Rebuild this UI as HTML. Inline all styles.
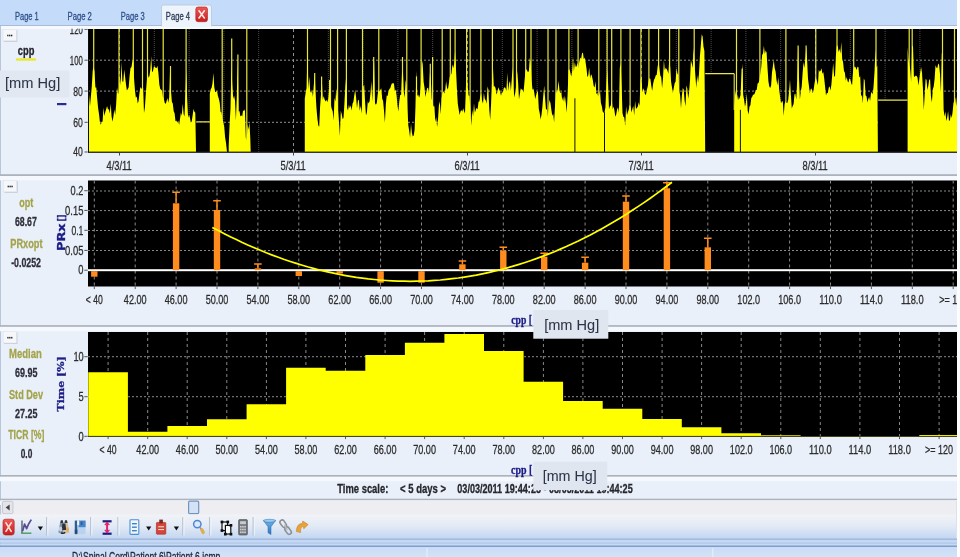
<!DOCTYPE html>
<html><head><meta charset="utf-8"><title>ICM+ Page 4</title>
<style>
html,body{margin:0;padding:0;background:#fff;}
body{width:960px;height:557px;overflow:hidden;font-family:"Liberation Sans",sans-serif;}
svg{display:block;}
</style></head><body>
<svg width="960" height="557" viewBox="0 0 960 557">
<defs><filter id="soft" x="0" y="0" width="960" height="557" filterUnits="userSpaceOnUse"><feGaussianBlur stdDeviation="0.55" edgeMode="duplicate"/></filter></defs>
<g filter="url(#soft)">
<rect x="0" y="0" width="960" height="557" fill="#e9f0fa"/>
<rect x="0" y="0" width="960" height="26" fill="#c4dcf9"/>
<rect x="0" y="25" width="960" height="1" fill="#a9bbd6"/>
<rect x="0" y="26" width="960" height="3" fill="#f6f9fd"/>
<path d="M161.5 26 V7 Q161.5 5 163.5 5 H209.5 Q211.5 5 211.5 7 V26 Z" fill="#eef4fc" stroke="#b4c6e0" stroke-width="0.8"/>
<rect x="162" y="25" width="49" height="2" fill="#eef4fc"/>
<text x="15" y="19.7" font-family='"Liberation Sans", sans-serif' font-size="10.5" font-weight="normal" fill="#30508c" stroke="#30508c" stroke-width="0.3" text-anchor="start" textLength="23.8" lengthAdjust="spacingAndGlyphs" >Page 1</text>
<text x="67.5" y="19.7" font-family='"Liberation Sans", sans-serif' font-size="10.5" font-weight="normal" fill="#30508c" stroke="#30508c" stroke-width="0.3" text-anchor="start" textLength="24.4" lengthAdjust="spacingAndGlyphs" >Page 2</text>
<text x="120.8" y="19.7" font-family='"Liberation Sans", sans-serif' font-size="10.5" font-weight="normal" fill="#30508c" stroke="#30508c" stroke-width="0.3" text-anchor="start" textLength="23.9" lengthAdjust="spacingAndGlyphs" >Page 3</text>
<text x="165.8" y="19.7" font-family='"Liberation Sans", sans-serif' font-size="10.5" font-weight="normal" fill="#2c3a58" stroke="#2c3a58" stroke-width="0.3" text-anchor="start" textLength="24.2" lengthAdjust="spacingAndGlyphs" >Page 4</text>
<rect x="195.8" y="7" width="11.7" height="14.7" rx="2.2" fill="url(#redg)" stroke="#b02020" stroke-width="0.6"/>
<path d="M199 10.8 L204.4 18 M204.4 10.8 L199 18" stroke="#fde9e6" stroke-width="1.6" stroke-linecap="round"/>
<rect x="0" y="26" width="1" height="520" fill="#b8c6dc"/>
<rect x="0" y="174.2" width="957" height="1.8" fill="#adb3be"/>
<rect x="0" y="176.0" width="957" height="4.4" fill="#f5f8fd"/>
<rect x="0" y="325.1" width="957" height="1.8" fill="#adb3be"/>
<rect x="0" y="326.90000000000003" width="957" height="4.4" fill="#f5f8fd"/>
<rect x="0" y="475" width="957" height="1.8" fill="#adb3be"/>
<rect x="0" y="476.8" width="957" height="4.4" fill="#f5f8fd"/>
<rect x="0" y="498.7" width="957" height="1.8" fill="#adb3be"/>
<rect x="0" y="500.5" width="957" height="4.4" fill="#f5f8fd"/>
<rect x="88" y="29" width="869" height="123.5" fill="#000"/>
<path d="M88 60.2 H957 M88 91.1 H957 M88 122.3 H957" stroke="#909090" stroke-width="1" stroke-dasharray="2 2" fill="none"/>
<path d="M119.5 29 V152 M293.5 29 V152 M467.5 29 V152 M641.5 29 V152 M815.5 29 V152" stroke="#909090" stroke-width="1" stroke-dasharray="3 3" fill="none"/>
<path d="M154.3 29 V152 M189.1 29 V152 M223.9 29 V152 M258.7 29 V152 M328.3 29 V152 M363.1 29 V152 M397.9 29 V152 M432.7 29 V152 M502.3 29 V152 M537.1 29 V152 M571.9 29 V152 M606.7 29 V152 M676.3 29 V152 M711.1 29 V152 M745.9 29 V152 M780.7 29 V152 M850.3 29 V152 M885.1 29 V152 M919.9 29 V152 M954.7 29 V152" stroke="#4c4c4c" stroke-width="1" stroke-dasharray="1 1" fill="none"/>
<rect x="705.2" y="74" width="29" height="78" fill="#000"/><rect x="878.1" y="100.4" width="29.5" height="51.6" fill="#000"/><rect x="196.3" y="122.2" width="13.5" height="29.8" fill="#000"/>
<path d="M734.2 73.7 V110" stroke="#e6e650" stroke-width="1.1" fill="none"/>
<path d="M196.3 121.9 H209.8 M705.2 73.7 H734.2 M878.1 100.1 H907.6" stroke="#e6e650" stroke-width="1.2" fill="none"/>
<path d="M93.7 29.0 V142.0 M119.0 29.0 V142.0 M133.3 29.0 V142.0 M142.5 29.0 V142.0 M147.5 29.0 V142.0 M163.2 29.0 V142.0 M186.1 29.0 V142.0 M222.2 29.0 V142.0 M246.8 29.0 V142.0 M307.5 29.0 V142.0 M330.5 29.0 V142.0 M337.6 29.0 V142.0 M346.4 29.0 V142.0 M362.5 29.0 V142.0 M378.8 29.0 V142.0 M406.8 29.0 V142.0 M421.1 29.0 V142.0 M442.2 29.0 V142.0 M450.3 29.0 V142.0 M455.1 29.0 V142.0 M466.6 29.0 V142.0 M470.1 29.0 V142.0 M480.9 29.0 V142.0 M492.4 29.0 V142.0 M513.0 29.0 V142.0 M516.5 29.0 V142.0 M525.7 29.0 V142.0 M531.0 29.0 V142.0 M548.0 29.0 V142.0 M556.0 29.0 V142.0 M568.9 29.0 V142.0 M578.1 29.0 V142.0 M598.8 29.0 V142.0 M607.1 29.0 V142.0 M611.7 29.0 V142.0 M620.9 29.0 V142.0 M630.1 29.0 V142.0 M640.9 29.0 V142.0 M648.9 29.0 V142.0 M658.6 29.0 V142.0 M669.6 29.0 V142.0 M678.8 29.0 V142.0 M694.2 29.0 V142.0 M736.5 29.0 V142.0 M759.9 29.0 V142.0 M785.9 29.0 V142.0 M815.8 29.0 V142.0 M837.0 29.0 V142.0 M853.7 29.0 V142.0 M876.0 29.0 V142.0 M909.2 29.0 V142.0 M912.2 29.0 V142.0 M942.5 29.0 V142.0 M954.5 29.0 V142.0" stroke="#e6e63c" stroke-width="1.2" fill="none"/>
<path d="M170.5 66.1 V142.0 M231.7 38.5 V142.0 M237.9 54.6 V142.0 M314.7 73.0 V142.0 M321.6 76.4 V142.0 M329.6 79.9 V142.0 M373.7 56.9 V142.0 M402.5 56.9 V142.0 M416.5 76.4 V142.0 M430.3 63.8 V142.0 M432.6 56.9 V142.0 M742.2 68.4 V142.0 M798.1 45.4 V142.0 M806.1 45.4 V142.0" stroke="#e6e63c" stroke-width="1.2" fill="none"/>
<path d="M88.2 152.0 L88.2 95.3 L89.1 95.0 L90.0 106.2 L90.9 96.5 L91.8 86.2 L92.7 70.8 L93.6 66.8 L94.5 71.3 L95.4 87.6 L96.3 87.4 L97.2 98.6 L98.1 107.9 L99.0 114.1 L99.9 122.0 L100.8 124.8 L101.7 122.0 L102.6 121.5 L103.5 107.5 L104.4 116.0 L105.3 111.9 L106.2 109.1 L107.1 106.0 L108.0 109.5 L108.9 109.3 L109.8 113.6 L110.7 103.5 L111.6 116.4 L112.5 121.7 L113.4 116.5 L114.3 109.6 L115.2 115.1 L116.1 105.0 L117.0 87.2 L117.9 93.3 L118.8 93.7 L119.7 74.3 L120.6 85.3 L121.5 62.0 L122.4 81.8 L123.3 81.6 L124.2 69.4 L125.1 76.8 L126.0 84.5 L126.9 90.6 L127.8 88.9 L128.7 87.3 L129.6 75.8 L130.5 68.0 L131.4 67.3 L132.3 62.0 L133.2 59.3 L134.1 79.2 L135.0 90.8 L135.9 97.7 L136.8 96.5 L137.7 103.4 L138.6 101.1 L139.5 92.8 L140.4 87.0 L141.3 88.5 L142.2 88.8 L143.1 87.8 L144.0 113.1 L144.9 107.6 L145.8 93.4 L146.7 83.0 L147.6 71.9 L148.5 77.7 L149.4 76.3 L150.3 69.9 L151.2 55.9 L152.1 72.3 L153.0 70.9 L153.9 66.4 L154.8 66.4 L155.7 68.0 L156.6 68.0 L157.5 65.7 L158.4 72.9 L159.3 84.2 L160.2 88.8 L161.1 89.7 L162.0 90.7 L162.9 96.9 L163.8 98.5 L164.7 102.8 L165.6 103.9 L166.5 101.6 L167.4 98.0 L168.3 102.8 L169.2 97.6 L170.1 67.8 L171.0 92.3 L171.9 101.9 L172.8 103.6 L173.7 111.2 L174.6 113.3 L175.5 121.2 L176.4 120.4 L177.3 123.1 L178.2 120.6 L179.1 125.1 L180.0 118.9 L180.9 112.4 L181.8 115.7 L182.7 103.8 L183.6 114.0 L184.5 116.4 L185.4 93.7 L186.3 69.4 L187.2 99.6 L188.1 117.7 L189.0 114.7 L189.9 117.5 L190.8 122.5 L191.7 121.4 L192.6 115.5 L193.5 109.1 L194.4 111.8 L195.3 112.8 L196.0 152.0 Z M209.8 152.0 L209.8 93.7 L210.7 89.2 L211.6 87.8 L212.5 83.3 L213.4 73.1 L214.3 87.3 L215.2 92.0 L216.1 91.9 L217.0 90.4 L217.9 95.8 L218.8 98.7 L219.7 102.4 L220.6 112.0 L221.5 112.4 L222.4 119.0 L223.3 122.1 L224.2 126.8 L225.1 137.2 L226.0 142.7 L226.9 151.0 L227.1 152.0 Z M228.7 152.0 L228.7 145.9 L229.6 124.3 L230.5 108.6 L231.4 66.2 L232.3 85.1 L233.2 98.8 L234.1 95.6 L235.0 100.6 L235.9 120.6 L236.8 96.6 L237.7 62.2 L238.6 111.7 L239.5 111.1 L240.4 116.4 L241.3 115.2 L242.2 116.4 L243.1 110.2 L244.0 111.2 L244.9 109.0 L245.8 137.6 L246.7 140.5 L247.6 124.3 L248.5 129.4 L249.4 122.0 L250.3 138.4 L250.7 152.0 Z M304.8 152.0 L304.8 98.8 L305.7 92.2 L306.6 88.1 L307.5 51.4 L308.4 89.5 L309.3 76.6 L310.2 91.1 L311.1 93.0 L312.0 89.6 L312.9 97.0 L313.8 85.2 L314.7 73.9 L315.6 94.0 L316.5 108.4 L317.4 118.7 L318.3 125.4 L319.2 126.7 L320.1 106.4 L321.0 94.5 L321.9 81.3 L322.8 99.7 L323.7 96.0 L324.6 99.5 L325.5 101.6 L326.4 99.8 L327.3 102.2 L328.2 98.9 L329.1 89.1 L330.0 88.8 L330.9 105.8 L331.8 109.0 L332.7 111.2 L333.6 120.4 L334.5 97.8 L335.4 101.6 L336.3 88.3 L337.2 99.5 L338.1 110.9 L339.0 122.0 L339.9 136.0 L340.8 110.8 L341.7 114.1 L342.6 119.1 L343.5 117.9 L344.4 103.8 L345.3 87.0 L346.2 76.1 L347.1 107.9 L348.0 110.6 L348.9 104.8 L349.8 108.2 L350.7 105.3 L351.6 110.4 L352.5 103.8 L353.4 101.8 L354.3 95.2 L355.2 89.5 L356.1 97.4 L357.0 108.3 L357.9 100.8 L358.8 99.4 L359.7 110.7 L360.6 105.5 L361.5 113.6 L362.4 101.4 L363.3 86.2 L364.2 84.8 L365.1 102.4 L366.0 115.5 L366.9 112.4 L367.8 101.6 L368.7 103.4 L369.6 101.3 L370.5 92.9 L371.4 81.0 L372.3 101.6 L373.2 77.7 L374.1 61.0 L375.0 103.2 L375.9 104.7 L376.8 103.1 L377.7 94.3 L378.6 88.8 L379.5 91.6 L380.4 89.7 L381.3 88.2 L382.2 98.8 L383.1 101.0 L384.0 110.5 L384.9 123.0 L385.8 104.5 L386.7 95.6 L387.6 95.9 L388.5 91.2 L389.4 89.0 L390.3 88.1 L391.2 84.9 L392.1 82.9 L393.0 83.7 L393.9 82.9 L394.8 91.1 L395.7 89.6 L396.6 95.6 L397.5 105.7 L398.4 111.6 L399.3 101.1 L400.2 94.8 L401.1 94.9 L402.0 73.4 L402.9 71.4 L403.8 91.9 L404.7 97.7 L405.6 79.7 L406.5 84.9 L407.4 108.9 L408.3 125.3 L409.2 130.9 L410.1 137.7 L411.0 123.7 L411.9 132.7 L412.8 136.4 L413.7 135.5 L414.6 130.0 L415.5 106.8 L416.4 70.6 L417.3 95.9 L418.2 94.4 L419.1 97.8 L420.0 94.7 L420.9 84.2 L421.8 59.2 L422.7 64.1 L423.6 81.7 L424.5 87.6 L425.4 97.0 L426.3 92.1 L427.2 88.1 L428.1 87.7 L429.0 93.3 L429.9 72.6 L430.8 78.6 L431.7 98.8 L432.6 102.8 L433.5 106.6 L434.4 106.3 L435.3 122.0 L436.2 117.0 L437.1 126.9 L438.0 119.3 L438.9 105.4 L439.8 101.3 L440.7 114.5 L441.6 98.0 L442.5 93.5 L443.4 91.0 L444.3 93.5 L445.2 90.2 L446.1 81.2 L447.0 87.7 L447.9 89.6 L448.8 84.0 L449.7 76.9 L450.6 75.2 L451.5 73.5 L452.4 64.3 L453.3 68.3 L454.2 63.5 L455.1 50.6 L456.0 69.4 L456.9 88.5 L457.8 103.7 L458.7 109.6 L459.6 115.0 L460.5 111.5 L461.4 110.0 L462.3 111.7 L463.2 108.2 L464.1 111.2 L465.0 113.5 L465.9 87.8 L466.8 69.1 L467.7 86.3 L468.6 95.4 L469.5 95.9 L470.4 109.3 L471.3 125.8 L472.2 110.1 L473.1 116.4 L474.0 103.3 L474.9 112.7 L475.8 109.8 L476.7 107.7 L477.6 109.5 L478.5 101.8 L479.4 101.5 L480.3 96.3 L481.2 93.0 L482.1 100.7 L483.0 103.4 L483.9 92.7 L484.8 99.0 L485.7 100.3 L486.6 103.8 L487.5 86.5 L488.4 89.5 L489.3 109.8 L490.2 120.1 L491.1 103.5 L492.0 83.1 L492.9 66.2 L493.8 86.5 L494.7 86.3 L495.6 88.3 L496.5 94.5 L497.4 91.9 L498.3 87.3 L499.2 89.4 L500.1 91.6 L501.0 95.7 L501.9 92.1 L502.8 92.7 L503.7 88.3 L504.6 87.2 L505.5 87.9 L506.4 90.9 L507.3 72.7 L508.2 91.0 L509.1 83.3 L510.0 80.9 L510.9 91.0 L511.8 78.7 L512.7 67.0 L513.6 90.2 L514.5 97.5 L515.4 91.7 L516.3 84.8 L517.2 70.9 L518.1 82.6 L519.0 99.4 L519.9 93.8 L520.8 88.2 L521.7 89.5 L522.6 89.7 L523.5 92.6 L524.4 82.4 L525.3 72.4 L526.2 69.1 L527.1 70.6 L528.0 72.3 L528.9 71.1 L529.8 57.8 L530.7 61.7 L531.6 80.5 L532.5 89.8 L533.4 88.5 L534.3 92.8 L535.2 99.3 L536.1 95.2 L537.0 92.0 L537.9 91.3 L538.8 108.9 L539.7 113.1 L540.6 119.6 L541.5 114.8 L542.4 106.8 L543.3 95.2 L544.2 85.6 L545.1 98.3 L546.0 109.6 L546.9 109.3 L547.8 117.1 L548.7 105.4 L549.6 99.7 L550.5 103.3 L551.4 109.9 L552.3 115.7 L553.2 113.7 L554.1 122.4 L555.0 105.9 L555.9 90.3 L556.8 92.9 L557.7 89.1 L558.6 80.7 L559.5 90.4 L560.4 93.2 L561.3 91.4 L562.2 100.4 L563.1 96.5 L564.0 102.1 L564.9 95.6 L565.8 102.8 L566.7 112.7 L567.6 94.7 L568.5 69.9 L569.4 69.2 L570.3 72.3 L571.2 76.7 L572.1 72.0 L573.0 56.8 L573.9 71.3 L574.8 62.3 L575.7 66.7 L576.6 66.4 L577.5 62.8 L578.4 67.8 L579.3 61.6 L580.2 57.5 L581.1 59.0 L582.0 53.6 L582.9 52.5 L583.8 59.2 L584.7 57.4 L585.6 62.2 L586.5 68.6 L587.4 77.3 L588.3 75.3 L589.2 67.5 L590.1 78.5 L591.0 74.1 L591.9 76.1 L592.8 80.1 L593.7 86.1 L594.6 87.5 L595.5 81.3 L596.4 94.2 L597.3 92.4 L598.2 96.8 L599.1 94.4 L600.0 90.0 L600.9 103.0 L601.8 106.0 L602.7 111.5 L603.6 112.8 L604.5 112.5 L605.4 107.6 L606.3 86.7 L607.2 69.3 L608.1 84.1 L609.0 109.2 L609.9 106.6 L610.8 105.4 L611.7 98.6 L612.6 109.6 L613.5 106.6 L614.4 110.3 L615.3 116.8 L616.2 114.4 L617.1 109.6 L618.0 107.2 L618.9 113.0 L619.8 67.9 L620.7 63.1 L621.6 85.4 L622.5 112.9 L623.4 116.7 L624.3 117.5 L625.2 125.9 L626.1 105.9 L627.0 115.1 L627.9 112.0 L628.8 109.4 L629.7 104.7 L630.6 106.5 L631.5 112.4 L632.4 108.7 L633.3 105.9 L634.2 115.5 L635.1 100.9 L636.0 108.7 L636.9 108.1 L637.8 106.4 L638.7 102.3 L639.6 105.9 L640.5 80.0 L641.4 75.4 L642.3 92.2 L643.2 88.2 L644.1 90.5 L645.0 94.2 L645.9 95.1 L646.8 89.9 L647.7 86.4 L648.6 81.6 L649.5 77.9 L650.4 79.0 L651.3 86.1 L652.2 91.1 L653.1 84.0 L654.0 79.8 L654.9 78.2 L655.8 75.3 L656.7 74.9 L657.6 67.1 L658.5 61.2 L659.4 68.6 L660.3 75.6 L661.2 77.3 L662.1 88.2 L663.0 78.2 L663.9 59.9 L664.8 70.2 L665.7 67.8 L666.6 69.0 L667.5 70.8 L668.4 73.7 L669.3 59.0 L670.2 67.2 L671.1 81.7 L672.0 87.5 L672.9 93.1 L673.8 87.8 L674.7 82.9 L675.6 81.7 L676.5 67.8 L677.4 73.5 L678.3 74.9 L679.2 91.7 L680.1 95.0 L681.0 108.3 L681.9 95.3 L682.8 88.1 L683.7 89.6 L684.6 100.5 L685.5 106.2 L686.4 85.5 L687.3 88.4 L688.2 98.7 L689.1 92.0 L690.0 80.6 L690.9 59.9 L691.8 63.6 L692.7 67.9 L693.6 47.9 L694.5 62.6 L695.4 76.0 L696.3 88.0 L697.2 75.2 L698.1 82.6 L699.0 73.6 L699.9 56.6 L700.8 45.7 L701.7 34.6 L702.6 36.3 L703.5 46.7 L704.4 50.9 L705.2 152.0 Z M734.2 152.0 L734.2 107.6 L735.1 94.8 L736.0 89.5 L736.9 100.8 L737.8 94.4 L738.7 100.1 L739.6 98.1 L740.5 95.3 L741.4 77.1 L742.3 63.8 L743.2 95.1 L744.1 99.8 L745.0 106.7 L745.9 103.1 L746.8 93.5 L747.7 110.8 L748.6 114.6 L749.5 106.6 L750.4 105.2 L751.3 98.0 L752.2 96.8 L753.1 94.4 L754.0 94.8 L754.9 92.9 L755.8 90.1 L756.7 90.1 L757.6 83.6 L758.5 83.0 L759.4 80.0 L760.3 73.7 L761.2 67.5 L762.1 55.1 L763.0 53.6 L763.9 45.8 L764.8 53.9 L765.7 50.5 L766.6 52.5 L767.5 67.8 L768.4 81.2 L769.3 86.4 L770.2 87.9 L771.1 85.4 L772.0 72.2 L772.9 66.3 L773.8 59.8 L774.7 68.3 L775.6 71.5 L776.5 80.0 L777.4 85.3 L778.3 76.9 L779.2 89.8 L780.1 96.8 L781.0 103.3 L781.9 101.4 L782.8 101.3 L783.7 115.8 L784.6 104.2 L785.5 101.3 L786.4 102.9 L787.3 103.1 L788.2 99.8 L789.1 91.2 L790.0 79.2 L790.9 95.2 L791.8 108.4 L792.7 105.9 L793.6 103.9 L794.5 94.2 L795.4 93.7 L796.3 99.6 L797.2 80.5 L798.1 44.9 L799.0 78.3 L799.9 99.5 L800.8 91.5 L801.7 86.6 L802.6 73.6 L803.5 62.0 L804.4 68.1 L805.3 58.7 L806.2 47.3 L807.1 59.7 L808.0 78.7 L808.9 85.6 L809.8 93.2 L810.7 89.1 L811.6 88.5 L812.5 93.1 L813.4 91.5 L814.3 84.7 L815.2 79.4 L816.1 78.2 L817.0 81.2 L817.9 85.2 L818.8 69.7 L819.7 71.7 L820.6 70.7 L821.5 68.3 L822.4 73.8 L823.3 72.0 L824.2 78.3 L825.1 86.7 L826.0 95.4 L826.9 92.8 L827.8 93.3 L828.7 87.7 L829.6 86.3 L830.5 90.6 L831.4 84.6 L832.3 73.7 L833.2 63.0 L834.1 75.9 L835.0 76.7 L835.9 56.1 L836.8 45.6 L837.7 45.8 L838.6 52.3 L839.5 48.8 L840.4 53.6 L841.3 42.2 L842.2 59.0 L843.1 62.3 L844.0 71.0 L844.9 72.8 L845.8 80.7 L846.7 76.9 L847.6 81.2 L848.5 82.4 L849.4 78.3 L850.3 79.5 L851.2 83.3 L852.1 85.3 L853.0 71.9 L853.9 68.0 L854.8 66.2 L855.7 67.5 L856.6 70.0 L857.5 66.7 L858.4 67.1 L859.3 77.6 L860.2 76.3 L861.1 96.6 L862.0 94.7 L862.9 103.4 L863.8 78.4 L864.7 80.4 L865.6 95.6 L866.5 96.2 L867.4 102.4 L868.3 99.0 L869.2 96.9 L870.1 101.1 L871.0 93.4 L871.9 91.7 L872.8 94.5 L873.7 84.4 L874.6 70.6 L875.5 49.1 L876.4 67.4 L877.3 65.4 L877.9 152.0 Z M907.6 152.0 L907.6 47.0 L908.5 59.5 L909.4 64.7 L910.3 70.8 L911.2 82.2 L912.1 46.3 L913.0 45.8 L913.9 76.6 L914.8 76.8 L915.7 75.5 L916.6 76.1 L917.5 77.4 L918.4 85.5 L919.3 79.5 L920.2 72.6 L921.1 67.1 L922.0 72.8 L922.9 87.8 L923.8 110.3 L924.7 95.1 L925.6 79.0 L926.5 79.7 L927.4 90.0 L928.3 85.7 L929.2 79.7 L930.1 79.2 L931.0 96.7 L931.9 102.6 L932.8 89.2 L933.7 86.6 L934.6 79.1 L935.5 65.3 L936.4 67.5 L937.3 68.3 L938.2 63.4 L939.1 64.7 L940.0 73.7 L940.9 92.7 L941.8 52.2 L942.7 60.9 L943.6 109.6 L944.5 116.6 L945.4 111.5 L946.3 120.9 L947.2 117.5 L948.1 111.0 L949.0 121.0 L949.9 120.3 L950.8 114.3 L951.7 117.9 L952.6 112.0 L953.5 102.8 L954.4 101.4 L955.3 97.6 L956.2 106.0 L957.1 94.8 L957.2 152.0 Z" fill="#ffff00"/>
<path d="M574.9 98.3 V152.0 M604.5 112.1 V152.0 M740.4 109.8 V152.0" stroke="#111" stroke-width="1" fill="none"/>
<rect x="88" y="151.6" width="869" height="1.1" fill="#1a1a1a"/>
<rect x="88" y="29" width="1" height="123.5" fill="#111"/>
<path d="M119.5 152.5 V155.5 M293.5 152.5 V155.5 M467.5 152.5 V155.5 M641.5 152.5 V155.5 M815.5 152.5 V155.5" stroke="#444" stroke-width="1"/>
<text x="106.6" y="170" font-family='"Liberation Sans", sans-serif' font-size="13" font-weight="normal" fill="#2c2c2c" stroke="#2c2c2c" stroke-width="0.3" text-anchor="start" textLength="25.2" lengthAdjust="spacingAndGlyphs" >4/3/11</text>
<text x="280.6" y="170" font-family='"Liberation Sans", sans-serif' font-size="13" font-weight="normal" fill="#2c2c2c" stroke="#2c2c2c" stroke-width="0.3" text-anchor="start" textLength="25.2" lengthAdjust="spacingAndGlyphs" >5/3/11</text>
<text x="454.6" y="170" font-family='"Liberation Sans", sans-serif' font-size="13" font-weight="normal" fill="#2c2c2c" stroke="#2c2c2c" stroke-width="0.3" text-anchor="start" textLength="25.2" lengthAdjust="spacingAndGlyphs" >6/3/11</text>
<text x="628.6" y="170" font-family='"Liberation Sans", sans-serif' font-size="13" font-weight="normal" fill="#2c2c2c" stroke="#2c2c2c" stroke-width="0.3" text-anchor="start" textLength="25.2" lengthAdjust="spacingAndGlyphs" >7/3/11</text>
<text x="802.6" y="170" font-family='"Liberation Sans", sans-serif' font-size="13" font-weight="normal" fill="#2c2c2c" stroke="#2c2c2c" stroke-width="0.3" text-anchor="start" textLength="25.2" lengthAdjust="spacingAndGlyphs" >8/3/11</text>
<clipPath id="c1"><rect x="60" y="28.8" width="30" height="130"/></clipPath>
<g clip-path="url(#c1)">
<text x="82.8" y="33.7" font-family='"Liberation Sans", sans-serif' font-size="13.4" font-weight="normal" fill="#2c2c2c" stroke="#2c2c2c" stroke-width="0.3" text-anchor="end" textLength="13" lengthAdjust="spacingAndGlyphs" >120</text>
<rect x="84.5" y="28.8" width="3.2" height="1" fill="#555"/>
<text x="82.8" y="64.60000000000001" font-family='"Liberation Sans", sans-serif' font-size="13.4" font-weight="normal" fill="#2c2c2c" stroke="#2c2c2c" stroke-width="0.3" text-anchor="end" textLength="13" lengthAdjust="spacingAndGlyphs" >100</text>
<rect x="84.5" y="59.7" width="3.2" height="1" fill="#555"/>
<text x="82.8" y="95.5" font-family='"Liberation Sans", sans-serif' font-size="13.4" font-weight="normal" fill="#2c2c2c" stroke="#2c2c2c" stroke-width="0.3" text-anchor="end" textLength="9.6" lengthAdjust="spacingAndGlyphs" >80</text>
<rect x="84.5" y="90.6" width="3.2" height="1" fill="#555"/>
<text x="82.8" y="126.7" font-family='"Liberation Sans", sans-serif' font-size="13.4" font-weight="normal" fill="#2c2c2c" stroke="#2c2c2c" stroke-width="0.3" text-anchor="end" textLength="9.6" lengthAdjust="spacingAndGlyphs" >60</text>
<rect x="84.5" y="121.8" width="3.2" height="1" fill="#555"/>
<text x="82.8" y="156.4" font-family='"Liberation Sans", sans-serif' font-size="13.4" font-weight="normal" fill="#2c2c2c" stroke="#2c2c2c" stroke-width="0.3" text-anchor="end" textLength="9.6" lengthAdjust="spacingAndGlyphs" >40</text>
<rect x="84.5" y="151.5" width="3.2" height="1" fill="#555"/>
</g>
<rect x="4" y="30.3" width="13.3" height="11.5" fill="#c3c9d4"/>
<rect x="3" y="29.3" width="13.3" height="11.5" fill="#f5f7fb" stroke="#dfe4ec" stroke-width="0.6"/>
<rect x="7.2" y="34.7" width="1.3" height="1.6" fill="#222"/>
<rect x="9.1" y="34.7" width="1.3" height="1.6" fill="#222"/>
<rect x="11.0" y="34.7" width="1.3" height="1.6" fill="#222"/>
<text x="17.8" y="55.2" font-family='"Liberation Sans", sans-serif' font-size="13" font-weight="bold" fill="#22222a" stroke="#22222a" stroke-width="0.3" text-anchor="start" textLength="16.6" lengthAdjust="spacingAndGlyphs" >cpp</text>
<rect x="15.8" y="58.3" width="20.4" height="2.4" rx="1" fill="#e9e930"/>
<rect x="57" y="103" width="9.4" height="2.2" fill="#2a2a90"/>
<rect x="0" y="70.5" width="69.5" height="27" fill="#e2e8f2"/>
<text x="5" y="88.3" font-family='"Liberation Sans", sans-serif' font-size="14.2" font-weight="normal" fill="#2c3448" stroke="#2c3448" stroke-width="0.05" text-anchor="start" textLength="55.3" lengthAdjust="spacingAndGlyphs" >[mm Hg]</text>
<rect x="88" y="180.5" width="869" height="106.0" fill="#000"/>
<path d="M88 191 H957 M88 210.6 H957 M88 230.5 H957 M88 250.5 H957" stroke="#888888" stroke-width="1" stroke-dasharray="2 2" fill="none"/>
<path d="M94.3 180.5 V286.5 M135.2 180.5 V286.5 M176.1 180.5 V286.5 M217.0 180.5 V286.5 M257.9 180.5 V286.5 M298.8 180.5 V286.5 M339.7 180.5 V286.5 M380.6 180.5 V286.5 M421.5 180.5 V286.5 M462.4 180.5 V286.5 M503.3 180.5 V286.5 M544.2 180.5 V286.5 M585.1 180.5 V286.5 M626.0 180.5 V286.5 M666.9 180.5 V286.5 M707.8 180.5 V286.5 M748.7 180.5 V286.5 M789.6 180.5 V286.5 M830.5 180.5 V286.5 M871.4 180.5 V286.5 M912.3 180.5 V286.5 M953.2 180.5 V286.5" stroke="#888888" stroke-width="1" stroke-dasharray="3 3" fill="none"/>
<rect x="88" y="269.2" width="869" height="2" fill="#fff"/>
<rect x="91.1" y="271.2" width="6.4" height="5.5" fill="#ff8c1e"/>
<rect x="172.9" y="203.3" width="6.4" height="66.9" fill="#ff8c1e"/>
<path d="M176.1 203.3 V192.3 M172.3 192.3 H179.9" stroke="#ff8c1e" stroke-width="1.5" fill="none"/>
<rect x="213.8" y="210" width="6.4" height="60.2" fill="#ff8c1e"/>
<path d="M217.0 210 V200.7 M213.2 200.7 H220.8" stroke="#ff8c1e" stroke-width="1.5" fill="none"/>
<rect x="254.7" y="268.3" width="6.4" height="1.9" fill="#ff8c1e"/>
<path d="M257.9 268.3 V264 M254.1 264 H261.7" stroke="#ff8c1e" stroke-width="1.5" fill="none"/>
<rect x="295.6" y="271.2" width="6.4" height="4.8" fill="#ff8c1e"/>
<rect x="336.5" y="271.2" width="6.4" height="2.3" fill="#ff8c1e"/>
<rect x="377.4" y="271.2" width="6.4" height="11.5" fill="#ff8c1e"/>
<rect x="418.3" y="271.2" width="6.4" height="11.5" fill="#ff8c1e"/>
<rect x="459.2" y="264.3" width="6.4" height="5.9" fill="#ff8c1e"/>
<path d="M462.4 264.3 V261 M458.6 261 H466.2" stroke="#ff8c1e" stroke-width="1.5" fill="none"/>
<rect x="500.1" y="250.7" width="6.4" height="19.5" fill="#ff8c1e"/>
<path d="M503.3 250.7 V247.3 M499.5 247.3 H507.1" stroke="#ff8c1e" stroke-width="1.5" fill="none"/>
<rect x="541.0" y="256.7" width="6.4" height="13.5" fill="#ff8c1e"/>
<path d="M544.2 256.7 V253.3 M540.4 253.3 H548.0" stroke="#ff8c1e" stroke-width="1.5" fill="none"/>
<rect x="581.9" y="262.7" width="6.4" height="7.5" fill="#ff8c1e"/>
<path d="M585.1 262.7 V257.3 M581.3 257.3 H588.9" stroke="#ff8c1e" stroke-width="1.5" fill="none"/>
<rect x="622.8" y="201.7" width="6.4" height="68.5" fill="#ff8c1e"/>
<path d="M626.0 201.7 V196 M622.2 196 H629.8" stroke="#ff8c1e" stroke-width="1.5" fill="none"/>
<rect x="663.7" y="188.3" width="6.4" height="81.9" fill="#ff8c1e"/>
<path d="M666.9 188.3 V182.7 M663.1 182.7 H670.7" stroke="#ff8c1e" stroke-width="1.5" fill="none"/>
<rect x="704.6" y="247.3" width="6.4" height="22.9" fill="#ff8c1e"/>
<path d="M707.8 247.3 V238.3 M704.0 238.3 H711.6" stroke="#ff8c1e" stroke-width="1.5" fill="none"/>
<path d="M212.3 227.4 L218.3 230.6 L224.3 233.7 L230.3 236.7 L236.3 239.6 L242.3 242.5 L248.3 245.2 L254.3 247.8 L260.3 250.3 L266.3 252.8 L272.3 255.1 L278.3 257.3 L284.3 259.5 L290.3 261.5 L296.3 263.4 L302.3 265.2 L308.3 267.0 L314.3 268.6 L320.3 270.2 L326.3 271.6 L332.3 272.9 L338.3 274.2 L344.3 275.3 L350.3 276.3 L356.3 277.3 L362.3 278.1 L368.3 278.9 L374.3 279.5 L380.3 280.1 L386.3 280.5 L392.3 280.8 L398.3 281.1 L404.3 281.2 L410.3 281.3 L416.3 281.2 L422.3 281.0 L428.3 280.8 L434.3 280.4 L440.3 280.0 L446.3 279.4 L452.3 278.7 L458.3 278.0 L464.3 277.1 L470.3 276.1 L476.3 275.1 L482.3 273.9 L488.3 272.6 L494.3 271.2 L500.3 269.7 L506.3 268.1 L512.3 266.4 L518.3 264.6 L524.3 262.7 L530.3 260.7 L536.3 258.6 L542.3 256.4 L548.3 254.1 L554.3 251.7 L560.3 249.1 L566.3 246.5 L572.3 243.7 L578.3 240.9 L584.3 237.9 L590.3 234.9 L596.3 231.7 L602.3 228.4 L608.3 225.0 L614.3 221.5 L620.3 217.9 L626.3 214.2 L632.3 210.3 L638.3 206.4 L644.3 202.4 L650.3 198.2 L656.3 193.9 L662.3 189.5 L668.3 185.0 L672.0 182.2" stroke="#ffff00" stroke-width="1.7" fill="none" stroke-linejoin="round"/>
<path d="M94.3 286.5 V289.1 M135.2 286.5 V289.1 M176.1 286.5 V289.1 M217.0 286.5 V289.1 M257.9 286.5 V289.1 M298.8 286.5 V289.1 M339.7 286.5 V289.1 M380.6 286.5 V289.1 M421.5 286.5 V289.1 M462.4 286.5 V289.1 M503.3 286.5 V289.1 M544.2 286.5 V289.1 M585.1 286.5 V289.1 M626.0 286.5 V289.1 M666.9 286.5 V289.1 M707.8 286.5 V289.1 M748.7 286.5 V289.1 M789.6 286.5 V289.1 M830.5 286.5 V289.1 M871.4 286.5 V289.1 M912.3 286.5 V289.1 M953.2 286.5 V289.1" stroke="#5a5a5a" stroke-width="1"/>
<clipPath id="c2"><rect x="60" y="285" width="897" height="30"/></clipPath><g clip-path="url(#c2)">
<text x="94.3" y="304.2" font-family='"Liberation Sans", sans-serif' font-size="13.4" font-weight="normal" fill="#2c2c2c" stroke="#2c2c2c" stroke-width="0.3" text-anchor="middle" textLength="17" lengthAdjust="spacingAndGlyphs" >&lt; 40</text>
<text x="135.2" y="304.2" font-family='"Liberation Sans", sans-serif' font-size="13.4" font-weight="normal" fill="#2c2c2c" stroke="#2c2c2c" stroke-width="0.3" text-anchor="middle" textLength="22.7" lengthAdjust="spacingAndGlyphs" >42.00</text>
<text x="176.1" y="304.2" font-family='"Liberation Sans", sans-serif' font-size="13.4" font-weight="normal" fill="#2c2c2c" stroke="#2c2c2c" stroke-width="0.3" text-anchor="middle" textLength="22.7" lengthAdjust="spacingAndGlyphs" >46.00</text>
<text x="217.0" y="304.2" font-family='"Liberation Sans", sans-serif' font-size="13.4" font-weight="normal" fill="#2c2c2c" stroke="#2c2c2c" stroke-width="0.3" text-anchor="middle" textLength="22.7" lengthAdjust="spacingAndGlyphs" >50.00</text>
<text x="257.9" y="304.2" font-family='"Liberation Sans", sans-serif' font-size="13.4" font-weight="normal" fill="#2c2c2c" stroke="#2c2c2c" stroke-width="0.3" text-anchor="middle" textLength="22.7" lengthAdjust="spacingAndGlyphs" >54.00</text>
<text x="298.8" y="304.2" font-family='"Liberation Sans", sans-serif' font-size="13.4" font-weight="normal" fill="#2c2c2c" stroke="#2c2c2c" stroke-width="0.3" text-anchor="middle" textLength="22.7" lengthAdjust="spacingAndGlyphs" >58.00</text>
<text x="339.7" y="304.2" font-family='"Liberation Sans", sans-serif' font-size="13.4" font-weight="normal" fill="#2c2c2c" stroke="#2c2c2c" stroke-width="0.3" text-anchor="middle" textLength="22.7" lengthAdjust="spacingAndGlyphs" >62.00</text>
<text x="380.6" y="304.2" font-family='"Liberation Sans", sans-serif' font-size="13.4" font-weight="normal" fill="#2c2c2c" stroke="#2c2c2c" stroke-width="0.3" text-anchor="middle" textLength="22.7" lengthAdjust="spacingAndGlyphs" >66.00</text>
<text x="421.5" y="304.2" font-family='"Liberation Sans", sans-serif' font-size="13.4" font-weight="normal" fill="#2c2c2c" stroke="#2c2c2c" stroke-width="0.3" text-anchor="middle" textLength="22.7" lengthAdjust="spacingAndGlyphs" >70.00</text>
<text x="462.4" y="304.2" font-family='"Liberation Sans", sans-serif' font-size="13.4" font-weight="normal" fill="#2c2c2c" stroke="#2c2c2c" stroke-width="0.3" text-anchor="middle" textLength="22.7" lengthAdjust="spacingAndGlyphs" >74.00</text>
<text x="503.3" y="304.2" font-family='"Liberation Sans", sans-serif' font-size="13.4" font-weight="normal" fill="#2c2c2c" stroke="#2c2c2c" stroke-width="0.3" text-anchor="middle" textLength="22.7" lengthAdjust="spacingAndGlyphs" >78.00</text>
<text x="544.2" y="304.2" font-family='"Liberation Sans", sans-serif' font-size="13.4" font-weight="normal" fill="#2c2c2c" stroke="#2c2c2c" stroke-width="0.3" text-anchor="middle" textLength="22.7" lengthAdjust="spacingAndGlyphs" >82.00</text>
<text x="585.1" y="304.2" font-family='"Liberation Sans", sans-serif' font-size="13.4" font-weight="normal" fill="#2c2c2c" stroke="#2c2c2c" stroke-width="0.3" text-anchor="middle" textLength="22.7" lengthAdjust="spacingAndGlyphs" >86.00</text>
<text x="626.0" y="304.2" font-family='"Liberation Sans", sans-serif' font-size="13.4" font-weight="normal" fill="#2c2c2c" stroke="#2c2c2c" stroke-width="0.3" text-anchor="middle" textLength="22.7" lengthAdjust="spacingAndGlyphs" >90.00</text>
<text x="666.9" y="304.2" font-family='"Liberation Sans", sans-serif' font-size="13.4" font-weight="normal" fill="#2c2c2c" stroke="#2c2c2c" stroke-width="0.3" text-anchor="middle" textLength="22.7" lengthAdjust="spacingAndGlyphs" >94.00</text>
<text x="707.8" y="304.2" font-family='"Liberation Sans", sans-serif' font-size="13.4" font-weight="normal" fill="#2c2c2c" stroke="#2c2c2c" stroke-width="0.3" text-anchor="middle" textLength="22.7" lengthAdjust="spacingAndGlyphs" >98.00</text>
<text x="748.7" y="304.2" font-family='"Liberation Sans", sans-serif' font-size="13.4" font-weight="normal" fill="#2c2c2c" stroke="#2c2c2c" stroke-width="0.3" text-anchor="middle" textLength="22.7" lengthAdjust="spacingAndGlyphs" >102.0</text>
<text x="789.6" y="304.2" font-family='"Liberation Sans", sans-serif' font-size="13.4" font-weight="normal" fill="#2c2c2c" stroke="#2c2c2c" stroke-width="0.3" text-anchor="middle" textLength="22.7" lengthAdjust="spacingAndGlyphs" >106.0</text>
<text x="830.5" y="304.2" font-family='"Liberation Sans", sans-serif' font-size="13.4" font-weight="normal" fill="#2c2c2c" stroke="#2c2c2c" stroke-width="0.3" text-anchor="middle" textLength="22.7" lengthAdjust="spacingAndGlyphs" >110.0</text>
<text x="871.4" y="304.2" font-family='"Liberation Sans", sans-serif' font-size="13.4" font-weight="normal" fill="#2c2c2c" stroke="#2c2c2c" stroke-width="0.3" text-anchor="middle" textLength="22.7" lengthAdjust="spacingAndGlyphs" >114.0</text>
<text x="912.3" y="304.2" font-family='"Liberation Sans", sans-serif' font-size="13.4" font-weight="normal" fill="#2c2c2c" stroke="#2c2c2c" stroke-width="0.3" text-anchor="middle" textLength="22.7" lengthAdjust="spacingAndGlyphs" >118.0</text>
<text x="953.2" y="304.2" font-family='"Liberation Sans", sans-serif' font-size="13.4" font-weight="normal" fill="#2c2c2c" stroke="#2c2c2c" stroke-width="0.3" text-anchor="middle" textLength="28" lengthAdjust="spacingAndGlyphs" >&gt;= 120</text>
</g>
<text x="83.4" y="194.89999999999998" font-family='"Liberation Sans", sans-serif' font-size="13.4" font-weight="normal" fill="#2c2c2c" stroke="#2c2c2c" stroke-width="0.3" text-anchor="end" textLength="12.8" lengthAdjust="spacingAndGlyphs" >0.2</text>
<rect x="84.3" y="190.2" width="3.4" height="1" fill="#555"/>
<text x="83.4" y="214.6" font-family='"Liberation Sans", sans-serif' font-size="13.4" font-weight="normal" fill="#2c2c2c" stroke="#2c2c2c" stroke-width="0.3" text-anchor="end" textLength="18.3" lengthAdjust="spacingAndGlyphs" >0.15</text>
<rect x="84.3" y="209.9" width="3.4" height="1" fill="#555"/>
<text x="83.4" y="234.5" font-family='"Liberation Sans", sans-serif' font-size="13.4" font-weight="normal" fill="#2c2c2c" stroke="#2c2c2c" stroke-width="0.3" text-anchor="end" textLength="12" lengthAdjust="spacingAndGlyphs" >0.1</text>
<rect x="84.3" y="229.8" width="3.4" height="1" fill="#555"/>
<text x="83.4" y="254.6" font-family='"Liberation Sans", sans-serif' font-size="13.4" font-weight="normal" fill="#2c2c2c" stroke="#2c2c2c" stroke-width="0.3" text-anchor="end" textLength="18.3" lengthAdjust="spacingAndGlyphs" >0.05</text>
<rect x="84.3" y="249.9" width="3.4" height="1" fill="#555"/>
<text x="83.4" y="274.4" font-family='"Liberation Sans", sans-serif' font-size="13.4" font-weight="normal" fill="#2c2c2c" stroke="#2c2c2c" stroke-width="0.3" text-anchor="end" textLength="5.2" lengthAdjust="spacingAndGlyphs" >0</text>
<rect x="84.3" y="269.7" width="3.4" height="1" fill="#555"/>
<g transform="translate(64.5 251) rotate(-90)"><text x="0" y="0" font-family='"DejaVu Sans", "Liberation Sans", sans-serif' font-size="10" font-weight="bold" fill="#1c1c86" stroke="#1c1c86" stroke-width="0.3" text-anchor="start" textLength="27.6" lengthAdjust="spacingAndGlyphs" >PRx</text><text x="29.8" y="0" font-family='"DejaVu Sans", "Liberation Sans", sans-serif' font-size="10" font-weight="bold" fill="#1c1c86" stroke="#1c1c86" stroke-width="0.3" text-anchor="start" textLength="6.6" lengthAdjust="spacingAndGlyphs" >[]</text></g>
<rect x="4.4" y="181.3" width="13.3" height="11.5" fill="#c3c9d4"/>
<rect x="3.4" y="180.3" width="13.3" height="11.5" fill="#f5f7fb" stroke="#dfe4ec" stroke-width="0.6"/>
<rect x="7.6" y="185.70000000000002" width="1.3" height="1.6" fill="#222"/>
<rect x="9.5" y="185.70000000000002" width="1.3" height="1.6" fill="#222"/>
<rect x="11.399999999999999" y="185.70000000000002" width="1.3" height="1.6" fill="#222"/>
<text x="19.2" y="206.8" font-family='"Liberation Sans", sans-serif' font-size="13.6" font-weight="bold" fill="#a3a34a" stroke="#a3a34a" stroke-width="0.3" text-anchor="start" textLength="14" lengthAdjust="spacingAndGlyphs" >opt</text>
<text x="14.9" y="225.6" font-family='"Liberation Sans", sans-serif' font-size="13.6" font-weight="bold" fill="#2e2e38" stroke="#2e2e38" stroke-width="0.3" text-anchor="start" textLength="22" lengthAdjust="spacingAndGlyphs" >68.67</text>
<text x="10.3" y="247.8" font-family='"Liberation Sans", sans-serif' font-size="13.6" font-weight="bold" fill="#a3a34a" stroke="#a3a34a" stroke-width="0.3" text-anchor="start" textLength="32.2" lengthAdjust="spacingAndGlyphs" >PRxopt</text>
<text x="11.2" y="266.6" font-family='"Liberation Sans", sans-serif' font-size="13.6" font-weight="bold" fill="#2e2e38" stroke="#2e2e38" stroke-width="0.3" text-anchor="start" textLength="29.8" lengthAdjust="spacingAndGlyphs" >-0.0252</text>
<text x="511.3" y="324.2" font-family='"Liberation Serif", serif' font-size="11.5" font-weight="bold" fill="#1c1c86" stroke="#1c1c86" stroke-width="0.3" text-anchor="start" textLength="20.7" lengthAdjust="spacingAndGlyphs" >cpp [</text>
<rect x="88" y="332" width="869" height="104.30000000000001" fill="#000"/>
<path d="M88 356.7 H957 M88 396.7 H957" stroke="#888888" stroke-width="1" stroke-dasharray="2 2" fill="none"/>
<path d="M108.1 332 V436.3 M147.7 332 V436.3 M187.2 332 V436.3 M226.8 332 V436.3 M266.4 332 V436.3 M305.9 332 V436.3 M345.5 332 V436.3 M385.1 332 V436.3 M424.6 332 V436.3 M464.2 332 V436.3 M503.8 332 V436.3 M543.4 332 V436.3 M582.9 332 V436.3 M622.5 332 V436.3 M662.1 332 V436.3 M701.6 332 V436.3 M741.2 332 V436.3 M780.8 332 V436.3 M820.3 332 V436.3 M859.9 332 V436.3 M899.5 332 V436.3 M939.1 332 V436.3" stroke="#888888" stroke-width="1" stroke-dasharray="3 3" fill="none"/>
<path d="M88.3 436.3 L88.3 372.3 L127.9 372.3 L127.9 431.7 L167.4 431.7 L167.4 426 L207.0 426 L207.0 419.3 L246.6 419.3 L246.6 404.3 L286.1 404.3 L286.1 367.7 L325.7 367.7 L325.7 370.7 L365.3 370.7 L365.3 355 L404.9 355 L404.9 342.7 L444.4 342.7 L444.4 334 L484.0 334 L484.0 351 L523.6 351 L523.6 381.7 L563.1 381.7 L563.1 401 L602.7 401 L602.7 408.7 L642.3 408.7 L642.3 419 L681.8 419 L681.8 427.3 L721.4 427.3 L721.4 433.3 L761.0 433.3 L761.0 435.3 L800.6 435.3 L800.6 436.3 L840.1 436.3 L840.1 436.3 L879.7 436.3 L879.7 436.3 L919.3 436.3 L919.3 435 L957 435 L957 436.3 Z" fill="#ffff00"/>
<rect x="88" y="435.90000000000003" width="869" height="1" fill="#3a3a10"/>
<path d="M108.1 436.8 V439.1 M147.7 436.8 V439.1 M187.2 436.8 V439.1 M226.8 436.8 V439.1 M266.4 436.8 V439.1 M305.9 436.8 V439.1 M345.5 436.8 V439.1 M385.1 436.8 V439.1 M424.6 436.8 V439.1 M464.2 436.8 V439.1 M503.8 436.8 V439.1 M543.4 436.8 V439.1 M582.9 436.8 V439.1 M622.5 436.8 V439.1 M662.1 436.8 V439.1 M701.6 436.8 V439.1 M741.2 436.8 V439.1 M780.8 436.8 V439.1 M820.3 436.8 V439.1 M859.9 436.8 V439.1 M899.5 436.8 V439.1 M939.1 436.8 V439.1" stroke="#5a5a5a" stroke-width="1"/>
<clipPath id="c3"><rect x="60" y="436" width="897" height="30"/></clipPath><g clip-path="url(#c3)">
<text x="108.1" y="454.3" font-family='"Liberation Sans", sans-serif' font-size="13.4" font-weight="normal" fill="#2c2c2c" stroke="#2c2c2c" stroke-width="0.3" text-anchor="middle" textLength="17" lengthAdjust="spacingAndGlyphs" >&lt; 40</text>
<text x="147.7" y="454.3" font-family='"Liberation Sans", sans-serif' font-size="13.4" font-weight="normal" fill="#2c2c2c" stroke="#2c2c2c" stroke-width="0.3" text-anchor="middle" textLength="22.7" lengthAdjust="spacingAndGlyphs" >42.00</text>
<text x="187.2" y="454.3" font-family='"Liberation Sans", sans-serif' font-size="13.4" font-weight="normal" fill="#2c2c2c" stroke="#2c2c2c" stroke-width="0.3" text-anchor="middle" textLength="22.7" lengthAdjust="spacingAndGlyphs" >46.00</text>
<text x="226.8" y="454.3" font-family='"Liberation Sans", sans-serif' font-size="13.4" font-weight="normal" fill="#2c2c2c" stroke="#2c2c2c" stroke-width="0.3" text-anchor="middle" textLength="22.7" lengthAdjust="spacingAndGlyphs" >50.00</text>
<text x="266.4" y="454.3" font-family='"Liberation Sans", sans-serif' font-size="13.4" font-weight="normal" fill="#2c2c2c" stroke="#2c2c2c" stroke-width="0.3" text-anchor="middle" textLength="22.7" lengthAdjust="spacingAndGlyphs" >54.00</text>
<text x="305.9" y="454.3" font-family='"Liberation Sans", sans-serif' font-size="13.4" font-weight="normal" fill="#2c2c2c" stroke="#2c2c2c" stroke-width="0.3" text-anchor="middle" textLength="22.7" lengthAdjust="spacingAndGlyphs" >58.00</text>
<text x="345.5" y="454.3" font-family='"Liberation Sans", sans-serif' font-size="13.4" font-weight="normal" fill="#2c2c2c" stroke="#2c2c2c" stroke-width="0.3" text-anchor="middle" textLength="22.7" lengthAdjust="spacingAndGlyphs" >62.00</text>
<text x="385.1" y="454.3" font-family='"Liberation Sans", sans-serif' font-size="13.4" font-weight="normal" fill="#2c2c2c" stroke="#2c2c2c" stroke-width="0.3" text-anchor="middle" textLength="22.7" lengthAdjust="spacingAndGlyphs" >66.00</text>
<text x="424.6" y="454.3" font-family='"Liberation Sans", sans-serif' font-size="13.4" font-weight="normal" fill="#2c2c2c" stroke="#2c2c2c" stroke-width="0.3" text-anchor="middle" textLength="22.7" lengthAdjust="spacingAndGlyphs" >70.00</text>
<text x="464.2" y="454.3" font-family='"Liberation Sans", sans-serif' font-size="13.4" font-weight="normal" fill="#2c2c2c" stroke="#2c2c2c" stroke-width="0.3" text-anchor="middle" textLength="22.7" lengthAdjust="spacingAndGlyphs" >74.00</text>
<text x="503.8" y="454.3" font-family='"Liberation Sans", sans-serif' font-size="13.4" font-weight="normal" fill="#2c2c2c" stroke="#2c2c2c" stroke-width="0.3" text-anchor="middle" textLength="22.7" lengthAdjust="spacingAndGlyphs" >78.00</text>
<text x="543.4" y="454.3" font-family='"Liberation Sans", sans-serif' font-size="13.4" font-weight="normal" fill="#2c2c2c" stroke="#2c2c2c" stroke-width="0.3" text-anchor="middle" textLength="22.7" lengthAdjust="spacingAndGlyphs" >82.00</text>
<text x="582.9" y="454.3" font-family='"Liberation Sans", sans-serif' font-size="13.4" font-weight="normal" fill="#2c2c2c" stroke="#2c2c2c" stroke-width="0.3" text-anchor="middle" textLength="22.7" lengthAdjust="spacingAndGlyphs" >86.00</text>
<text x="622.5" y="454.3" font-family='"Liberation Sans", sans-serif' font-size="13.4" font-weight="normal" fill="#2c2c2c" stroke="#2c2c2c" stroke-width="0.3" text-anchor="middle" textLength="22.7" lengthAdjust="spacingAndGlyphs" >90.00</text>
<text x="662.1" y="454.3" font-family='"Liberation Sans", sans-serif' font-size="13.4" font-weight="normal" fill="#2c2c2c" stroke="#2c2c2c" stroke-width="0.3" text-anchor="middle" textLength="22.7" lengthAdjust="spacingAndGlyphs" >94.00</text>
<text x="701.6" y="454.3" font-family='"Liberation Sans", sans-serif' font-size="13.4" font-weight="normal" fill="#2c2c2c" stroke="#2c2c2c" stroke-width="0.3" text-anchor="middle" textLength="22.7" lengthAdjust="spacingAndGlyphs" >98.00</text>
<text x="741.2" y="454.3" font-family='"Liberation Sans", sans-serif' font-size="13.4" font-weight="normal" fill="#2c2c2c" stroke="#2c2c2c" stroke-width="0.3" text-anchor="middle" textLength="22.7" lengthAdjust="spacingAndGlyphs" >102.0</text>
<text x="780.8" y="454.3" font-family='"Liberation Sans", sans-serif' font-size="13.4" font-weight="normal" fill="#2c2c2c" stroke="#2c2c2c" stroke-width="0.3" text-anchor="middle" textLength="22.7" lengthAdjust="spacingAndGlyphs" >106.0</text>
<text x="820.3" y="454.3" font-family='"Liberation Sans", sans-serif' font-size="13.4" font-weight="normal" fill="#2c2c2c" stroke="#2c2c2c" stroke-width="0.3" text-anchor="middle" textLength="22.7" lengthAdjust="spacingAndGlyphs" >110.0</text>
<text x="859.9" y="454.3" font-family='"Liberation Sans", sans-serif' font-size="13.4" font-weight="normal" fill="#2c2c2c" stroke="#2c2c2c" stroke-width="0.3" text-anchor="middle" textLength="22.7" lengthAdjust="spacingAndGlyphs" >114.0</text>
<text x="899.5" y="454.3" font-family='"Liberation Sans", sans-serif' font-size="13.4" font-weight="normal" fill="#2c2c2c" stroke="#2c2c2c" stroke-width="0.3" text-anchor="middle" textLength="22.7" lengthAdjust="spacingAndGlyphs" >118.0</text>
<text x="939.1" y="454.3" font-family='"Liberation Sans", sans-serif' font-size="13.4" font-weight="normal" fill="#2c2c2c" stroke="#2c2c2c" stroke-width="0.3" text-anchor="middle" textLength="28" lengthAdjust="spacingAndGlyphs" >&gt;= 120</text>
</g>
<text x="83.7" y="361.2" font-family='"Liberation Sans", sans-serif' font-size="13.4" font-weight="normal" fill="#2c2c2c" stroke="#2c2c2c" stroke-width="0.3" text-anchor="end" textLength="10.3" lengthAdjust="spacingAndGlyphs" >10</text>
<rect x="84.3" y="356.2" width="3.4" height="1" fill="#555"/>
<text x="83.7" y="401.2" font-family='"Liberation Sans", sans-serif' font-size="13.4" font-weight="normal" fill="#2c2c2c" stroke="#2c2c2c" stroke-width="0.3" text-anchor="end" textLength="5.2" lengthAdjust="spacingAndGlyphs" >5</text>
<rect x="84.3" y="396.2" width="3.4" height="1" fill="#555"/>
<text x="83.7" y="440.8" font-family='"Liberation Sans", sans-serif' font-size="13.4" font-weight="normal" fill="#2c2c2c" stroke="#2c2c2c" stroke-width="0.3" text-anchor="end" textLength="5.2" lengthAdjust="spacingAndGlyphs" >0</text>
<rect x="84.3" y="435.8" width="3.4" height="1" fill="#555"/>
<g transform="translate(64.3 411.4) rotate(-90)"><text x="0" y="0" font-family='"DejaVu Serif", "Liberation Serif", serif' font-size="10" font-weight="bold" fill="#1c1c86" stroke="#1c1c86" stroke-width="0.3" text-anchor="start" textLength="55" lengthAdjust="spacingAndGlyphs" >Time [%]</text></g>
<rect x="4.1" y="332.5" width="13.3" height="11.5" fill="#c3c9d4"/>
<rect x="3.1" y="331.5" width="13.3" height="11.5" fill="#f5f7fb" stroke="#dfe4ec" stroke-width="0.6"/>
<rect x="7.300000000000001" y="336.9" width="1.3" height="1.6" fill="#222"/>
<rect x="9.200000000000001" y="336.9" width="1.3" height="1.6" fill="#222"/>
<rect x="11.100000000000001" y="336.9" width="1.3" height="1.6" fill="#222"/>
<text x="9" y="358.3" font-family='"Liberation Sans", sans-serif' font-size="13.6" font-weight="bold" fill="#a3a34a" stroke="#a3a34a" stroke-width="0.3" text-anchor="start" textLength="32.8" lengthAdjust="spacingAndGlyphs" >Median</text>
<text x="15" y="377" font-family='"Liberation Sans", sans-serif' font-size="13.6" font-weight="bold" fill="#2e2e38" stroke="#2e2e38" stroke-width="0.3" text-anchor="start" textLength="22.5" lengthAdjust="spacingAndGlyphs" >69.95</text>
<text x="9" y="398.9" font-family='"Liberation Sans", sans-serif' font-size="13.6" font-weight="bold" fill="#a3a34a" stroke="#a3a34a" stroke-width="0.3" text-anchor="start" textLength="34" lengthAdjust="spacingAndGlyphs" >Std Dev</text>
<text x="15" y="418.3" font-family='"Liberation Sans", sans-serif' font-size="13.6" font-weight="bold" fill="#2e2e38" stroke="#2e2e38" stroke-width="0.3" text-anchor="start" textLength="22.5" lengthAdjust="spacingAndGlyphs" >27.25</text>
<text x="8.3" y="439.3" font-family='"Liberation Sans", sans-serif' font-size="13.6" font-weight="bold" fill="#a3a34a" stroke="#a3a34a" stroke-width="0.3" text-anchor="start" textLength="36.1" lengthAdjust="spacingAndGlyphs" >TICR [%]</text>
<text x="20.7" y="458.3" font-family='"Liberation Sans", sans-serif' font-size="13.6" font-weight="bold" fill="#2e2e38" stroke="#2e2e38" stroke-width="0.3" text-anchor="start" textLength="11.6" lengthAdjust="spacingAndGlyphs" >0.0</text>
<text x="511" y="473.6" font-family='"Liberation Serif", serif' font-size="11.5" font-weight="bold" fill="#1c1c86" stroke="#1c1c86" stroke-width="0.3" text-anchor="start" textLength="21.3" lengthAdjust="spacingAndGlyphs" >cpp [</text>
<rect x="533.3" y="310" width="75" height="28.7" fill="#e0e6f0"/>
<text x="544.2" y="330.3" font-family='"Liberation Sans", sans-serif' font-size="14.2" font-weight="normal" fill="#2c3448" stroke="#2c3448" stroke-width="0.05" text-anchor="start" textLength="55" lengthAdjust="spacingAndGlyphs" >[mm Hg]</text>
<text x="337.3" y="492.8" font-family='"Liberation Sans", sans-serif' font-size="12.6" font-weight="bold" fill="#26262c" stroke="#26262c" stroke-width="0.3" text-anchor="start" textLength="51" lengthAdjust="spacingAndGlyphs" >Time scale:</text>
<text x="400" y="492.8" font-family='"Liberation Sans", sans-serif' font-size="12.6" font-weight="bold" fill="#26262c" stroke="#26262c" stroke-width="0.3" text-anchor="start" textLength="46" lengthAdjust="spacingAndGlyphs" >&lt; 5 days &gt;</text>
<text x="457.3" y="492.8" font-family='"Liberation Sans", sans-serif' font-size="12.6" font-weight="bold" fill="#26262c" stroke="#26262c" stroke-width="0.3" text-anchor="start" textLength="175.4" lengthAdjust="spacingAndGlyphs" >03/03/2011 19:44:25 - 08/03/2011 19:44:25</text>
<rect x="533.3" y="461.7" width="74" height="28.3" fill="#e0e6f0"/>
<text x="542.7" y="480.7" font-family='"Liberation Sans", sans-serif' font-size="14.2" font-weight="normal" fill="#2c3448" stroke="#2c3448" stroke-width="0.05" text-anchor="start" textLength="54" lengthAdjust="spacingAndGlyphs" >[mm Hg]</text>
<defs><linearGradient id="tbg" x1="0" y1="0" x2="0" y2="1"><stop offset="0" stop-color="#f1f3f7"/><stop offset="0.45" stop-color="#e4ebf6"/><stop offset="1" stop-color="#c3d6f1"/></linearGradient><linearGradient id="sbg" x1="0" y1="0" x2="0" y2="1"><stop offset="0" stop-color="#c9dcf6"/><stop offset="1" stop-color="#d3e2f8"/></linearGradient><linearGradient id="redg" x1="0" y1="0" x2="0" y2="1"><stop offset="0" stop-color="#ee5a55"/><stop offset="1" stop-color="#c71f1f"/></linearGradient><linearGradient id="blug" x1="0" y1="0" x2="0" y2="1"><stop offset="0" stop-color="#6fb3e6"/><stop offset="1" stop-color="#2d78c0"/></linearGradient></defs>
<rect x="1" y="500.5" width="956" height="14.5" fill="#eeeef2"/>
<rect x="2.5" y="501.3" width="10.5" height="12.4" rx="1.5" fill="#e3e5ea" stroke="#b9bcc6" stroke-width="0.7"/>
<path d="M9.6 504.6 L5.6 507.5 L9.6 510.4 Z" fill="#444"/>
<rect x="188.6" y="501.2" width="10.1" height="12.4" rx="1" fill="#d3e3f5" stroke="#7395bd" stroke-width="1.2"/>
<rect x="0" y="514.5" width="960" height="24" fill="url(#tbg)"/>
<rect x="0" y="538.3" width="960" height="1.7" fill="#a3badf"/>
<rect x="0" y="540" width="960" height="2.5" fill="#c2d8f6"/>
<rect x="0" y="542.5" width="960" height="1.3" fill="#a6bee2"/>
<rect x="0" y="543.8" width="960" height="1.6" fill="#c4daf7"/>
<rect x="0" y="545.4" width="960" height="1.7" fill="#819ec8"/>
<rect x="0" y="547.1" width="960" height="10" fill="url(#sbg)"/>
<rect x="426.5" y="548" width="1" height="9" fill="#e9f1fb"/><rect x="712.3" y="548" width="1" height="9" fill="#e9f1fb"/>
<rect x="956" y="501" width="1" height="37" fill="#dde1e9"/>
<rect x="46.3" y="517" width="1" height="18.5" fill="#a9b4c6"/><rect x="47.3" y="517" width="1" height="18.5" fill="#f4f7fb"/>
<rect x="90.3" y="517" width="1" height="18.5" fill="#a9b4c6"/><rect x="91.3" y="517" width="1" height="18.5" fill="#f4f7fb"/>
<rect x="117.5" y="517" width="1" height="18.5" fill="#a9b4c6"/><rect x="118.5" y="517" width="1" height="18.5" fill="#f4f7fb"/>
<rect x="182.4" y="517" width="1" height="18.5" fill="#a9b4c6"/><rect x="183.4" y="517" width="1" height="18.5" fill="#f4f7fb"/>
<rect x="209.3" y="517" width="1" height="18.5" fill="#a9b4c6"/><rect x="210.3" y="517" width="1" height="18.5" fill="#f4f7fb"/>
<rect x="252.7" y="517" width="1" height="18.5" fill="#a9b4c6"/><rect x="253.7" y="517" width="1" height="18.5" fill="#f4f7fb"/>
<path d="M37.8 526.4 h5.2 l-2.6 4 Z" fill="#111"/>
<path d="M146.10000000000002 526.4 h5.2 l-2.6 4 Z" fill="#111"/>
<path d="M173.8 526.4 h5.2 l-2.6 4 Z" fill="#111"/>
<rect x="3" y="519.2" width="11.2" height="15.8" rx="2.4" fill="url(#redg)" stroke="#a81c1c" stroke-width="0.6"/>
<path d="M6 522.8 L11.2 531.4 M11.2 522.8 L6 531.4" stroke="#fbe3e0" stroke-width="1.6" stroke-linecap="round"/>
<path d="M22 520.5 V533.4" stroke="#3c5a66" stroke-width="1.3" fill="none"/><path d="M21.4 533.2 H31.4" stroke="#4f9a5a" stroke-width="1.4" fill="none"/>
<path d="M22.6 531 L24.6 524 L26.6 528.6 L28.6 524 L31.3 519.6" stroke="#5a4c8e" stroke-width="1.7" fill="none" stroke-linejoin="round"/>
<path d="M60.8 520.2 h2 l0.6 2.8 h-3.2 Z M65 520.2 h2 l0.6 2.8 h-3.2 Z" fill="#2f3a48"/>
<path d="M60 523 h3.6 l1.2 9.4 q-3 2 -6.4 0 Z" fill="#7f8da6"/>
<path d="M64.2 523 h3.6 l1.6 9.4 q-3.4 2 -6.4 0 Z" fill="#d8c2a4"/>
<path d="M62.4 523.4 h3 l0.8 6.6 h-4.4 Z" fill="#2a303a"/>
<ellipse cx="60.6" cy="529" rx="1.7" ry="2.6" fill="#c5d3e8"/><ellipse cx="67.4" cy="529.6" rx="1.5" ry="2.4" fill="#e9a95a"/>
<path d="M61 532.8 q2.4 1.2 4.2 -0.6" stroke="#1f242c" stroke-width="1.4" fill="none"/>
<rect x="74.8" y="520.6" width="10.8" height="13.6" rx="0.8" fill="#b9d3ee"/>
<rect x="74.8" y="520.6" width="2.4" height="13.6" fill="#2f5f8f"/>
<rect x="78.6" y="520.6" width="7" height="6.6" fill="#4a84c8"/>
<rect x="77.2" y="520.6" width="2" height="4.6" fill="#eef4fb"/>
<rect x="80.8" y="521.6" width="1.6" height="3.4" fill="#2c5aa0"/>
<rect x="74.8" y="529.6" width="2.6" height="4" fill="#274a7a"/>
<rect x="102.6" y="520.2" width="9" height="2.2" fill="#1b1b80"/><rect x="102.6" y="532.6" width="9" height="2.2" fill="#1b1b80"/>
<path d="M107.1 522.4 V532.6" stroke="#e0206a" stroke-width="2"/>
<path d="M104.8 525.2 L107.1 522.6 L109.4 525.2 M104.8 529.8 L107.1 532.4 L109.4 529.8" stroke="#e0206a" stroke-width="1.2" fill="none"/>
<rect x="130" y="519.8" width="8.8" height="14.6" rx="0.8" fill="#eef5fd" stroke="#4a8fd0" stroke-width="1.1"/>
<rect x="132" y="523" width="4.8" height="1.4" fill="#3c82c6"/>
<rect x="132" y="526.5" width="4.8" height="1.4" fill="#3c82c6"/>
<rect x="132" y="530" width="4.8" height="1.4" fill="#3c82c6"/>
<rect x="156.4" y="522.4" width="9.4" height="11.8" rx="0.8" fill="#d64538" stroke="#9c2a22" stroke-width="0.6"/>
<rect x="159.3" y="519.6" width="3.6" height="3.8" fill="#7c2a22"/>
<rect x="158.2" y="526.2" width="5.8" height="1.1" fill="#f7d9d4"/><rect x="158.2" y="529" width="5.8" height="1.1" fill="#f7d9d4"/>
<circle cx="197.3" cy="524.1" r="3.7" fill="#dce9f8" stroke="#4f86d2" stroke-width="1.5"/>
<path d="M200 527.4 L201.6 529.6" stroke="#7f8fb0" stroke-width="1.6"/>
<path d="M201.8 529.8 L203.2 532.4" stroke="#e2ac52" stroke-width="3.4" stroke-linecap="round"/>
<rect x="222" y="522" width="5.6" height="8.6" fill="#f4f6fa" stroke="#111" stroke-width="1.2"/>
<rect x="225.4" y="525.4" width="5.4" height="8.6" fill="#fbfcfe" stroke="#111" stroke-width="1.2"/>
<rect x="220.6" y="520.6" width="2.7" height="2.7" fill="#111"/>
<rect x="226.4" y="520.6" width="2.7" height="2.7" fill="#111"/>
<rect x="220.6" y="529.2" width="2.7" height="2.7" fill="#111"/>
<rect x="224" y="532.8" width="2.7" height="2.7" fill="#111"/>
<rect x="229.6" y="532.8" width="2.7" height="2.7" fill="#111"/>
<rect x="229.6" y="524" width="2.7" height="2.7" fill="#111"/>
<rect x="238.6" y="519.6" width="8.8" height="15.4" rx="1" fill="#6f7378" stroke="#4b4e52" stroke-width="0.6"/>
<rect x="240.1" y="521.2" width="5.8" height="3" fill="#c9ccd0"/>
<rect x="240.1" y="525.8" width="1.5" height="1.8" fill="#d7d9dc"/>
<rect x="242.2" y="525.8" width="1.5" height="1.8" fill="#d7d9dc"/>
<rect x="244.29999999999998" y="525.8" width="1.5" height="1.8" fill="#d7d9dc"/>
<rect x="240.1" y="528.5999999999999" width="1.5" height="1.8" fill="#d7d9dc"/>
<rect x="242.2" y="528.5999999999999" width="1.5" height="1.8" fill="#d7d9dc"/>
<rect x="244.29999999999998" y="528.5999999999999" width="1.5" height="1.8" fill="#d7d9dc"/>
<rect x="240.1" y="531.4" width="1.5" height="1.8" fill="#d7d9dc"/>
<rect x="242.2" y="531.4" width="1.5" height="1.8" fill="#d7d9dc"/>
<rect x="244.29999999999998" y="531.4" width="1.5" height="1.8" fill="#d7d9dc"/>
<path d="M263.4 520.4 H275.6 L271 526.8 V534.6 L268 532.8 V526.8 Z" fill="url(#blug)" stroke="#2565a8" stroke-width="0.5"/>
<ellipse cx="269.5" cy="520.8" rx="6.1" ry="1.5" fill="#9bcbf0" stroke="#2b6eb2" stroke-width="0.5"/>
<g transform="rotate(-35 285.8 527.4)" fill="none" stroke="#8d9096" stroke-width="1.6"><rect x="283.6" y="518.8" width="4.4" height="8" rx="2.2"/><rect x="283.6" y="527.4" width="4.4" height="8" rx="2.2"/></g>
<path d="M284.4 524.6 L287.4 530.2" stroke="#b9bcc2" stroke-width="1.4"/>
<path d="M296.4 531.6 C296.4 526 299 523.4 302.4 523.6 L302.8 521 L308.2 524.6 L303.8 528.8 L303.4 526.6 C301 526.6 300.4 528.8 300.6 532.6 Z" fill="#e8a23c" stroke="#c07a1c" stroke-width="0.5"/>
<text x="72" y="560.8" font-family='"Liberation Sans", sans-serif' font-size="12" font-weight="normal" fill="#1d2740" stroke="#1d2740" stroke-width="0.3" text-anchor="start" textLength="148.3" lengthAdjust="spacingAndGlyphs" >D:\Spinal Cord\Patient 6\Patient 6.icmp</text>
<rect x="957" y="0" width="3" height="557" fill="#fdfdfe"/>
</g>
</svg>
</body></html>
